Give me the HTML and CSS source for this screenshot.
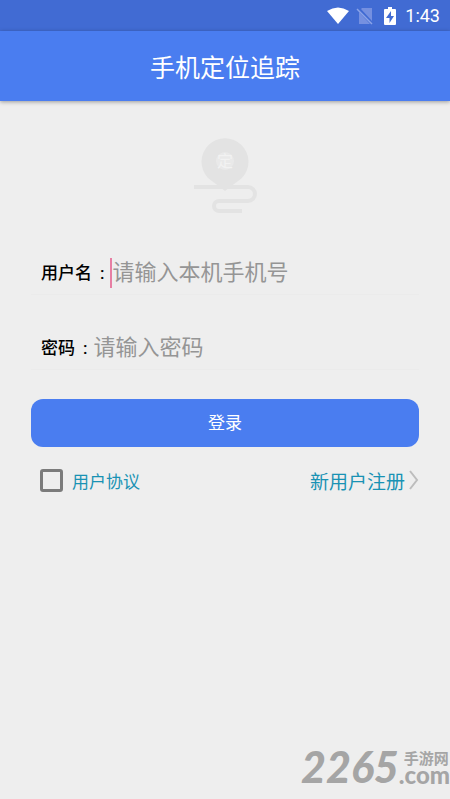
FILE: index.html
```html
<!DOCTYPE html>
<html lang="zh-CN">
<head>
<meta charset="utf-8">
<meta name="viewport" content="width=device-width, initial-scale=1">
<title>手机定位追踪</title>
<link rel="stylesheet" href="styles.css">
</head>
<body>
<div class="status">
  <svg width="22" height="18" viewBox="0 0 22 18" aria-hidden="true"><path d="M0 4Q11-3 22 4L11 17Z" fill="#fff"/></svg>
  <svg class="sim" width="18" height="18" viewBox="0 0 18 18" aria-hidden="true"><path d="M3 5v12h11zM6 1h10v13L5 2z" fill="#7590e0"/><path d="M1 2l15 15" stroke="#8ba4e8" stroke-width="1.5"/></svg>
  <svg class="battery" width="12" height="18" viewBox="0 0 12 18" aria-hidden="true"><path d="M4 0h4v2h3q1 0 1 1v14q0 1-1 1H1q-1 0-1-1V3q0-1 1-1h3z" fill="#fff"/><path d="M7 4L2 11h3.500v5L10 9H7z" fill="#416bd3"/></svg>
  <span>1:43</span>
</div>
<header class="toolbar"><h1>手机定位追踪</h1></header>
<main class="content">
  <svg class="logo" width="66" height="76" viewBox="0 0 66 76" aria-hidden="true">
    <path d="M2 49H56a6 6 0 0 1 0 14H27a5 5 0 0 0 0 10H50" fill="none" stroke="#e3e3e3" stroke-width="4"/>
    <path d="M33 53L16 40A23.500 23.500 0 1 1 50 40Z" fill="#e3e3e3"/>
    <circle cx="33" cy="23" r="9" fill="#e9e9e9"/>
    <text x="33" y="29" text-anchor="middle" class="logo-text">定</text>
  </svg>
  <form class="form">
    <div class="field">
      <label for="user"><span>用户名</span><span>:</span></label>
      <input class="focused" id="user" type="text" placeholder="请输入本机手机号">
    </div>
    <div class="field">
      <label for="pass"><span>密码</span><span>:</span></label>
      <input id="pass" type="password" placeholder="请输入密码">
    </div>
    <button type="button" class="login">登录</button>
    <div class="links">
      <input id="agree" type="checkbox" aria-label="用户协议">
      <a class="terms" href="#terms">用户协议</a>
      <a class="register" href="#register">新用户注册
        <svg width="10" height="20" viewBox="0 0 10 20" aria-hidden="true"><path d="M1 1l7 9-7 9" fill="none" stroke="#bdbdbd" stroke-width="2"/></svg>
      </a>
    </div>
  </form>
</main>
<div class="mark">
  <span class="mark-number">2265</span>
  <span class="mark-side"><span class="mark-name">手游网</span><span class="mark-domain">.com</span></span>
</div>
</body>
</html>
```
FILE: styles.css
```css
* {
  box-sizing: border-box;
}

body {
  margin: 0;
  min-height: 100vh;
  display: flex;
  flex-direction: column;
  overflow-x: hidden;
  background: #eee;
  font-family: Roboto, "Noto Sans CJK SC", sans-serif;
}

.status {
  height: 31px;
  padding: 0 10px;
  display: flex;
  align-items: center;
  justify-content: flex-end;
  background: #416bd3;
  color: #fff;
  font-size: 18px;
}

.sim {
  margin: 0 10px 0 7px;
}

.battery {
  margin-right: 9px;
}

.toolbar {
  height: 70px;
  padding-top: 6px;
  display: flex;
  align-items: center;
  justify-content: center;
  background: #4a7df0;
  box-shadow: 0 1px 4px rgba(0, 0, 0, 0.35);
}

.toolbar h1 {
  margin: 0;
  color: #fff;
  font-size: 25px;
  line-height: 36px;
  font-weight: 400;
}

.content {
  flex: 1;
  display: flex;
  flex-direction: column;
  padding: 37px 31px 0;
}

.logo {
  align-self: center;
}

.logo-text {
  fill: #f2f2f2;
  font-size: 16px;
}

.form {
  display: flex;
  flex-direction: column;
  padding-top: 35px;
}

.field {
  display: flex;
  align-items: center;
  height: 46px;
  margin-bottom: 29px;
  padding: 3px 0 0 10px;
  border-bottom: 1px solid #ebebeb;
}

.field label {
  display: flex;
  align-items: baseline;
  gap: 8px;
  padding-bottom: 4px;
  color: #000;
  font-size: 17px;
  font-weight: 500;
}

.field input {
  flex: 1;
  min-width: 0;
  height: 30px;
  margin-left: 6px;
  padding: 0;
  border: 0;
  outline: 0;
  background: none;
  font: 22px/30px Roboto, "Noto Sans CJK SC", sans-serif;
}

.field .focused {
  border-left: 2px solid #e77fa3;
}

.field input::placeholder {
  color: #959595;
  opacity: 1;
}

.login {
  height: 48px;
  border: 0;
  border-radius: 12px;
  background: #4a7df0;
  color: #fff;
  font: 17px/24px Roboto, "Noto Sans CJK SC", sans-serif;
}

.links {
  display: flex;
  align-items: center;
  height: 28px;
  margin-top: 19px;
  padding-left: 9px;
}

.links input {
  appearance: none;
  width: 23px;
  height: 23px;
  margin: 0 9px 0 0;
  border: 3px solid #7b7b7b;
  border-radius: 3px;
}

.links a {
  color: #1992b4;
  text-decoration: none;
}

.terms {
  font-size: 17px;
}

.register {
  display: flex;
  align-items: center;
  gap: 4px;
  margin-left: auto;
  font-size: 19px;
}

.mark {
  display: flex;
  justify-content: flex-end;
  align-items: center;
  height: 52px;
  margin-bottom: 6px;
  color: #a5a5a5;
  font-family: Lato, "Noto Sans CJK SC", sans-serif;
  font-weight: 900;
}

.mark-number {
  font-size: 43px;
  line-height: 52px;
  font-style: italic;
}

.mark-side {
  display: flex;
  flex-direction: column;
}

.mark-name {
  padding-left: 5px;
  font-size: 15px;
  line-height: 16px;
  font-weight: 700;
}

.mark-domain {
  font-size: 24px;
  line-height: 18px;
}
```
